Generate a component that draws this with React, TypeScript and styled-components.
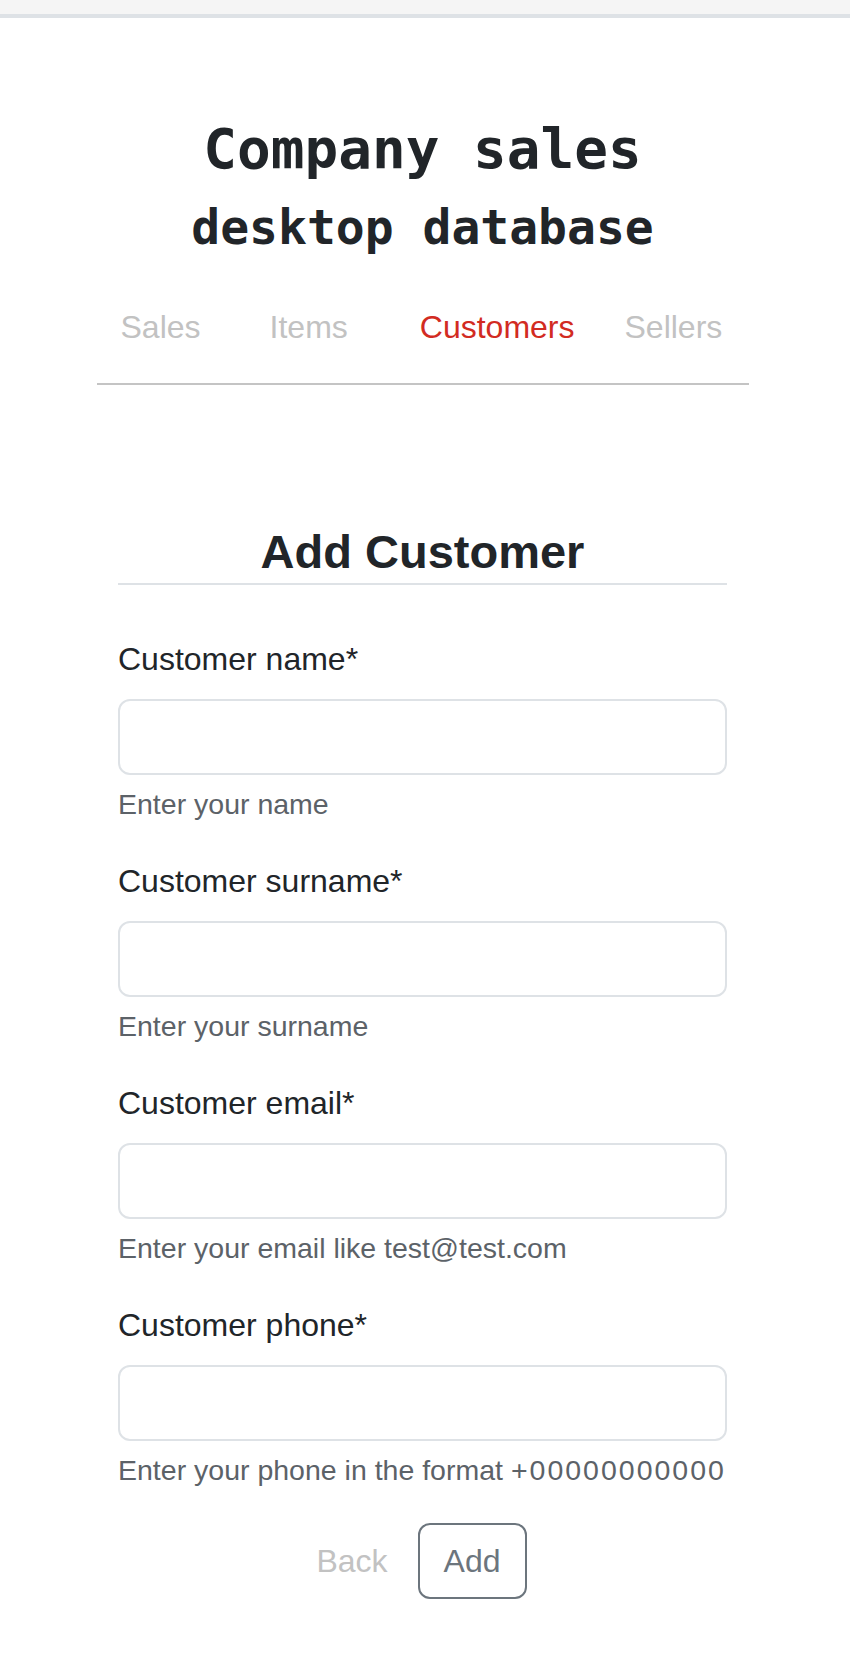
import React from "react";
import styled, { createGlobalStyle } from "styled-components";

const GlobalStyle = createGlobalStyle`
  html, body {
    margin: 0;
    padding: 0;
    background: #ffffff;
  }
  body {
    font-family: "Liberation Sans", Arial, Helvetica, sans-serif;
    color: #212529;
  }
  * { box-sizing: border-box; }
`;

const TopBar = styled.div`
  height: 18px;
  background: #f5f5f5;
  border-bottom: 4px solid #dee2e6;
`;

const Page = styled.div`
  display: flex;
  flex-direction: column;
  align-items: center;
  padding-right: 5px;
  padding-bottom: 67px;
`;

const Title = styled.h1<{ $size: number; $mt: number }>`
  margin: ${(p) => p.$mt}px 0 0;
  font-family: "DejaVu Sans Mono", "Liberation Mono", monospace;
  font-weight: 700;
  font-size: ${(p) => p.$size}px;
  line-height: 1.2;
  text-align: center;
`;

const Nav = styled.nav`
  display: flex;
  width: 652px;
  margin-top: 46px;
  padding: 0 0 32px 24px;
  border-bottom: 2px solid #c4c4c4;
`;

const NavLink = styled.a<{ $active?: boolean; $ml: number }>`
  margin-left: ${(p) => p.$ml}px;
  font-size: 32px;
  line-height: 48px;
  color: ${(p) => (p.$active ? "#d22b22" : "#c2c2c2")};
  text-decoration: none;
  cursor: pointer;
`;

const FormCard = styled.section`
  width: 609px;
  margin-top: 139px;
  display: flex;
  flex-direction: column;
`;

const Heading = styled.h2`
  margin: 0 0 50px;
  padding-bottom: 3px;
  font-size: 47px;
  font-weight: 700;
  line-height: 1.2;
  text-align: center;
  border-bottom: 2px solid #dee2e6;
`;

const Group = styled.div`
  display: flex;
  flex-direction: column;
  margin-bottom: 32px;
`;

const Label = styled.label`
  font-size: 32px;
  line-height: 48px;
  margin-bottom: 16px;
  color: #212529;
`;

const Input = styled.input`
  width: 100%;
  height: 76px;
  padding: 12px 24px;
  font-family: inherit;
  font-size: 32px;
  line-height: 48px;
  color: #212529;
  background: #fff;
  border: 2px solid #dee2e6;
  border-radius: 12px;
  outline: none;
`;

const Help = styled.div`
  margin-top: 8px;
  font-size: 28.5px;
  line-height: 42px;
  color: #5c6268;
  white-space: nowrap;
`;

const Digits = styled.span`
  letter-spacing: 2px;
`;

const ButtonRow = styled.div`
  display: flex;
  justify-content: center;
  gap: 4px;
  padding-right: 28px;
`;

const Button = styled.button<{ $outline?: boolean }>`
  font-family: inherit;
  font-size: 32px;
  line-height: 48px;
  padding: 12px 24px;
  border-radius: 12px;
  background: transparent;
  border: 2px solid ${(p) => (p.$outline ? "#6c757d" : "transparent")};
  color: ${(p) => (p.$outline ? "#6c757d" : "#c2c2c2")};
  cursor: pointer;
`;

const fields: { label: string; help: React.ReactNode; type: string }[] = [
  { label: "Customer name*", help: "Enter your name", type: "text" },
  { label: "Customer surname*", help: "Enter your surname", type: "text" },
  { label: "Customer email*", help: "Enter your email like test@test.com", type: "email" },
  {
    label: "Customer phone*",
    help: (
      <>
        Enter your phone in the format <Digits>+00000000000</Digits>
      </>
    ),
    type: "tel",
  },
];

const links = [
  { name: "Sales", ml: 0 },
  { name: "Items", ml: 69 },
  { name: "Customers", ml: 72, active: true },
  { name: "Sellers", ml: 50 },
];

export default function App() {
  return (
    <>
      <GlobalStyle />
      <TopBar />
      <Page>
        <Title $size={56} $mt={97}>Company sales</Title>
        <Title $size={48} $mt={17}>desktop database</Title>
        <Nav>
          {links.map((l) => (
            <NavLink key={l.name} $ml={l.ml} $active={l.active}>
              {l.name}
            </NavLink>
          ))}
        </Nav>
        <FormCard>
          <Heading>Add Customer</Heading>
          {fields.map((f, i) => (
            <Group key={f.label}>
              <Label htmlFor={`f${i}`}>{f.label}</Label>
              <Input id={`f${i}`} type={f.type} />
              <Help>{f.help}</Help>
            </Group>
          ))}
          <ButtonRow>
            <Button type="button">Back</Button>
            <Button type="button" $outline>
              Add
            </Button>
          </ButtonRow>
        </FormCard>
      </Page>
    </>
  );
}
